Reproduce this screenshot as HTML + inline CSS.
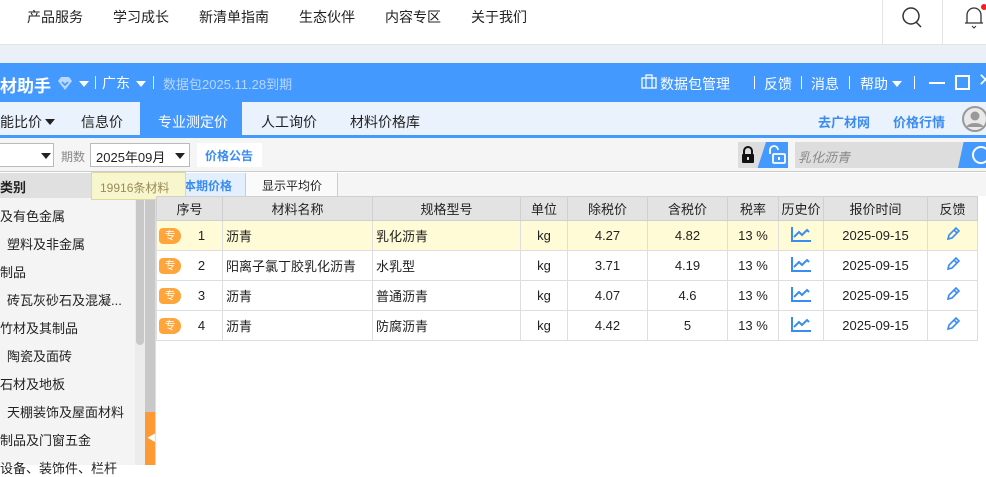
<!DOCTYPE html>
<html><head><meta charset="utf-8"><style>
*{margin:0;padding:0;box-sizing:border-box}
body{width:986px;height:465px;overflow:hidden;position:relative;background:#fff;font-family:"Liberation Sans","Noto Sans CJK SC",sans-serif;font-size:13px;color:#222}
.a{position:absolute;white-space:nowrap}
.top span{position:absolute;top:7px;font-size:14px;color:#222}
table{border-collapse:collapse;position:absolute;left:156px;top:196px;table-layout:fixed}
td,th{border:1px solid #dedede;height:30px;text-align:center;font-weight:normal;font-size:13px;color:#222}
th{background:#e3e3e3;height:24px;border-color:#d0d0d0}
tr.y td{background:#fffbd6}
td.l{text-align:left;padding-left:3px}
.z{display:inline-block;width:22px;height:16px;background:#ffa53a;color:#fff;border-radius:4px 8px 8px 4px;font-size:11px;line-height:16px;text-align:center;float:left;margin-left:2px}
.side span{position:absolute;font-size:13px;color:#222}
.tri{position:absolute;width:0;height:0;border-left:5px solid transparent;border-right:5px solid transparent;border-top:6px solid #fff}
</style></head><body>
<div class="a top" style="left:0;top:0;width:986px;height:45px;border-bottom:1px solid #e4e4e4">
<span style="left:27px">产品服务</span><span style="left:113px">学习成长</span><span style="left:199px">新清单指南</span><span style="left:299px">生态伙伴</span><span style="left:385px">内容专区</span><span style="left:471px">关于我们</span>
</div>
<div class="a" style="left:882px;top:0;width:1px;height:45px;background:#e4e4e4"></div>
<div class="a" style="left:942px;top:0;width:1px;height:45px;background:#e4e4e4"></div>
<svg class="a" style="left:900px;top:5px" width="26" height="26" viewBox="0 0 26 26"><circle cx="11" cy="11" r="8" fill="none" stroke="#333" stroke-width="1.5"/><path d="M16 17l5 5" stroke="#333" stroke-width="1.5"/></svg>
<svg class="a" style="left:962px;top:4px" width="24" height="26" viewBox="0 0 24 26"><path d="M5 19V11a7 7 0 0 1 14 0v8H3h18" fill="none" stroke="#333" stroke-width="1.3"/><path d="M10 22l2 2 2-2" fill="none" stroke="#333"/><circle cx="22" cy="3" r="3" fill="#e22"/></svg>
<div class="a" style="left:0;top:45px;width:986px;height:18px;background:#eaeff8"></div>
<!-- blue bar -->
<div class="a" style="left:0;top:63px;width:986px;height:39px;background:#4499ff;color:#fff">
<span class="a" style="left:0;top:9px;font-size:17px;font-weight:bold">材助手</span>
<svg class="a" style="left:57px;top:12px" width="16" height="16" viewBox="0 0 16 16"><path d="M4 2h8l3 4-7 9-7-9z" fill="#b9d7ff"/><path d="M5 7l3 3 3-3" fill="none" stroke="#4499ff" stroke-width="1.6"/></svg>
<div class="tri" style="left:79px;top:18px"></div>
<div class="a" style="left:95px;top:13px;width:1px;height:13px;background:#fff;opacity:.8"></div>
<span class="a" style="left:102px;top:10px;font-size:14px">广东</span><div class="tri" style="left:136px;top:18px"></div>
<div class="a" style="left:153px;top:13px;width:1px;height:13px;background:#fff;opacity:.8"></div>
<span class="a" style="left:163px;top:11px;font-size:13px;color:#b7d6ff">数据包2025.11.28到期</span>
<svg class="a" style="left:641px;top:10px" width="16" height="16" viewBox="0 0 16 16"><rect x="1" y="5" width="14" height="10" fill="none" stroke="#fff" stroke-width="1.3"/><path d="M5 5V2h6v3M5 5v10M11 5v10" fill="none" stroke="#fff" stroke-width="1.2"/></svg>
<span class="a" style="left:660px;top:11px;font-size:14px">数据包管理</span>
<div class="a" style="left:754px;top:13px;width:1px;height:13px;background:#fff"></div><span class="a" style="left:764px;top:11px;font-size:14px">反馈</span>
<div class="a" style="left:801px;top:13px;width:1px;height:13px;background:#fff"></div><span class="a" style="left:811px;top:11px;font-size:14px">消息</span>
<div class="a" style="left:849px;top:13px;width:1px;height:13px;background:#fff"></div><span class="a" style="left:860px;top:11px;font-size:14px">帮助</span><div class="tri" style="left:892px;top:18px"></div>
<div class="a" style="left:914px;top:13px;width:1px;height:13px;background:#fff"></div>
<div class="a" style="left:929px;top:19px;width:16px;height:2px;background:#fff"></div>
<div class="a" style="left:955px;top:12px;width:15px;height:15px;border:2px solid #fff"></div>
<span class="a" style="left:978px;top:7px;font-size:18px">✕</span>
</div>
<!-- tab row -->
<div class="a" style="left:0;top:102px;width:986px;height:33px;background:#eaf2fe"></div>
<div class="a" style="left:0;top:135px;width:986px;height:3px;background:#4499ff"></div>
<div class="a" style="left:140px;top:102px;width:102px;height:33px;background:#4499ff"></div>
<span class="a" style="left:0;top:112px;font-size:14px">能比价</span><div class="tri" style="left:45px;top:119px;border-top-color:#222"></div>
<span class="a" style="left:81px;top:112px;font-size:14px">信息价</span>
<span class="a" style="left:158px;top:112px;font-size:14px;color:#fff">专业测定价</span>
<span class="a" style="left:261px;top:112px;font-size:14px">人工询价</span>
<span class="a" style="left:350px;top:112px;font-size:14px">材料价格库</span>
<span class="a" style="left:818px;top:112px;font-size:13px;color:#3b8cf0;font-weight:bold">去广材网</span>
<span class="a" style="left:893px;top:112px;font-size:13px;color:#3b8cf0;font-weight:bold">价格行情</span>
<svg class="a" style="left:962px;top:105px" width="26" height="28" viewBox="0 0 26 28"><circle cx="13" cy="14" r="12" fill="#e9e9e9" stroke="#999" stroke-width="2"/><circle cx="13" cy="11" r="4.5" fill="#999"/><path d="M4 22a10 7 0 0 1 18 0z" fill="#999"/></svg>
<!-- toolbar -->
<div class="a" style="left:0;top:138px;width:986px;height:34px;background:#f5f5f5;border-bottom:1px solid #ccc"></div>
<div class="a" style="left:-2px;top:143px;width:56px;height:24px;background:#fff;border:1px solid #bbb"><div class="tri" style="left:42px;top:9px;border-top-color:#222"></div></div>
<span class="a" style="left:61px;top:148px;font-size:12px;color:#888">期数</span>
<div class="a" style="left:90px;top:143px;width:100px;height:24px;background:#fff;border:1px solid #bbb"><span class="a" style="left:5px;top:3px;font-size:13px">2025年09月</span><div class="tri" style="left:84px;top:9px;border-top-color:#222"></div></div>
<div class="a" style="left:197px;top:143px;width:65px;height:24px;background:#fff"><span class="a" style="left:8px;top:4px;font-size:12px;color:#3b8cf0;font-weight:bold">价格公告</span></div>
<div class="a" style="left:738px;top:142px;width:50px;height:26px;background:#4499ff"></div>
<div class="a" style="left:738px;top:142px;width:28px;height:26px;background:#ddd;clip-path:polygon(0 0,100% 0,70% 100%,0 100%)"></div>
<svg class="a" style="left:740px;top:145px" width="16" height="20" viewBox="0 0 16 20"><path d="M4 9V6a4 4 0 0 1 8 0v3" fill="none" stroke="#111" stroke-width="2"/><rect x="2" y="9" width="12" height="9" rx="1" fill="#111"/><rect x="7" y="12" width="2" height="3" fill="#ddd"/></svg>
<svg class="a" style="left:767px;top:145px" width="20" height="20" viewBox="0 0 20 20"><path d="M3 9V5a4 4 0 0 1 8 0" fill="none" stroke="#fff" stroke-width="1.8"/><rect x="6" y="9" width="12" height="9" rx="1" fill="none" stroke="#fff" stroke-width="1.8"/><rect x="11" y="12" width="2" height="3" fill="#fff"/></svg>
<div class="a" style="left:795px;top:142px;width:191px;height:26px;background:#ddd"></div>
<div class="a" style="left:958px;top:142px;width:28px;height:26px;background:#4499ff;clip-path:polygon(20% 0,100% 0,100% 100%,0 100%)"></div>
<span class="a" style="left:798px;top:147px;font-size:13px;color:#888;font-style:italic">乳化沥青</span>
<div class="a" style="left:972px;top:146px;width:18px;height:18px;border:2.5px solid #fff;border-radius:50%"></div>
<!-- sidebar -->
<div class="a side" style="left:0;top:173px;width:135px;height:292px;background:#f4f4f4">
<div class="a" style="left:0;top:0;width:135px;height:25px;background:#e0e0e0"></div>
<span style="left:0;top:4px;font-weight:bold">类别</span>
<span style="left:0;top:33px">及有色金属</span>
<span style="left:7px;top:61px">塑料及非金属</span>
<span style="left:0;top:89px">制品</span>
<span style="left:7px;top:117px">砖瓦灰砂石及混凝...</span>
<span style="left:0;top:145px">竹材及其制品</span>
<span style="left:7px;top:173px">陶瓷及面砖</span>
<span style="left:0;top:201px">石材及地板</span>
<span style="left:7px;top:229px">天棚装饰及屋面材料</span>
<span style="left:0;top:257px">制品及门窗五金</span>
<span style="left:0;top:285px">设备、装饰件、栏杆</span>
</div>
<div class="a" style="left:135px;top:173px;width:10px;height:292px;background:#ececec"></div>
<div class="a" style="left:136px;top:197px;width:8px;height:148px;background:#c8c8c8;border-radius:4px"></div>
<div class="a" style="left:145px;top:173px;width:10px;height:292px;background:#c8c8c8"></div>
<div class="a" style="left:145px;top:412px;width:10px;height:53px;background:#ff9933"></div>
<span class="a" style="left:147px;top:431px;font-size:9px;color:#fff">◀</span>
<div class="a" style="left:155px;top:173px;width:1px;height:292px;background:#ddd"></div>
<!-- sub tabs -->
<div class="a" style="left:156px;top:173px;width:830px;height:23px;background:#f5f5f5"></div>
<div class="a" style="left:156px;top:173px;width:90px;height:23px;background:#e3effd;border-right:1px solid #ccc"><span class="a" style="left:28px;top:4px;font-size:12px;color:#3b8cf0;font-weight:bold">本期价格</span></div>
<div class="a" style="left:246px;top:173px;width:92px;height:23px;background:#fafafa;border-right:1px solid #ccc"><span class="a" style="left:16px;top:4px;font-size:12px">显示平均价</span></div>
<div class="a" style="left:91px;top:172px;width:95px;height:28px;background:#f7f6cc;border:1px solid #ddd9a0"><span class="a" style="left:8px;top:6px;font-size:12px;color:#9a8b5a">19916条材料</span></div>
<table>
<colgroup><col style="width:66px"><col style="width:150px"><col style="width:148px"><col style="width:47px"><col style="width:80px"><col style="width:80px"><col style="width:51px"><col style="width:45px"><col style="width:104px"><col style="width:50px"></colgroup>
<tr><th>序号</th><th>材料名称</th><th>规格型号</th><th>单位</th><th>除税价</th><th>含税价</th><th>税率</th><th>历史价</th><th>报价时间</th><th>反馈</th></tr>
<tr class="y"><td><span class="z">专</span>1</td><td class="l">沥青</td><td class="l">乳化沥青</td><td>kg</td><td>4.27</td><td>4.82</td><td>13 %</td><td><svg width="20" height="16" viewBox="0 0 20 16"><path d="M1 1v14h19M3 11l5-5 3 3 5-5 2 2" fill="none" stroke="#3b8cf0" stroke-width="2"/></svg></td><td>2025-09-15</td><td><svg width="14" height="14" viewBox="0 0 14 14"><path d="M2 12l1-4 7-7 3 3-7 7z M8 3l3 3" fill="none" stroke="#3b8cf0" stroke-width="1.6"/></svg></td></tr>
<tr><td><span class="z">专</span>2</td><td class="l">阳离子氯丁胶乳化沥青</td><td class="l">水乳型</td><td>kg</td><td>3.71</td><td>4.19</td><td>13 %</td><td><svg width="20" height="16" viewBox="0 0 20 16"><path d="M1 1v14h19M3 11l5-5 3 3 5-5 2 2" fill="none" stroke="#3b8cf0" stroke-width="2"/></svg></td><td>2025-09-15</td><td><svg width="14" height="14" viewBox="0 0 14 14"><path d="M2 12l1-4 7-7 3 3-7 7z M8 3l3 3" fill="none" stroke="#3b8cf0" stroke-width="1.6"/></svg></td></tr>
<tr><td><span class="z">专</span>3</td><td class="l">沥青</td><td class="l">普通沥青</td><td>kg</td><td>4.07</td><td>4.6</td><td>13 %</td><td><svg width="20" height="16" viewBox="0 0 20 16"><path d="M1 1v14h19M3 11l5-5 3 3 5-5 2 2" fill="none" stroke="#3b8cf0" stroke-width="2"/></svg></td><td>2025-09-15</td><td><svg width="14" height="14" viewBox="0 0 14 14"><path d="M2 12l1-4 7-7 3 3-7 7z M8 3l3 3" fill="none" stroke="#3b8cf0" stroke-width="1.6"/></svg></td></tr>
<tr><td><span class="z">专</span>4</td><td class="l">沥青</td><td class="l">防腐沥青</td><td>kg</td><td>4.42</td><td>5</td><td>13 %</td><td><svg width="20" height="16" viewBox="0 0 20 16"><path d="M1 1v14h19M3 11l5-5 3 3 5-5 2 2" fill="none" stroke="#3b8cf0" stroke-width="2"/></svg></td><td>2025-09-15</td><td><svg width="14" height="14" viewBox="0 0 14 14"><path d="M2 12l1-4 7-7 3 3-7 7z M8 3l3 3" fill="none" stroke="#3b8cf0" stroke-width="1.6"/></svg></td></tr>
</table>
</body></html>
